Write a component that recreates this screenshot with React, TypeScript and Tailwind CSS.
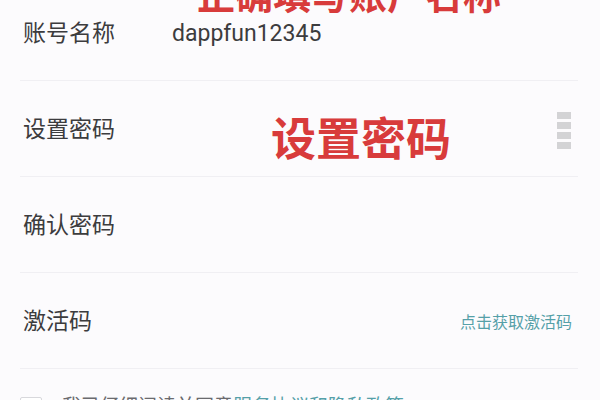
import React from "react";

const rows = [
  { label: "账号名称", value: "dappfun12345" },
  { label: "设置密码", value: "" },
  { label: "确认密码", value: "" },
  { label: "激活码", value: "" },
];

const HandleIcon = () => (
  <div className="flex flex-col gap-[3px] w-[14px]">
    <span className="h-[7px] bg-[#d3d3d5]" />
    <span className="h-[7px] bg-[#d3d3d5]" />
    <span className="h-[7px] bg-[#d3d3d5]" />
    <span className="h-[7px] bg-[#d3d3d5]" />
  </div>
);

export default function App() {
  return (
    <div className="relative w-[600px] h-[400px] overflow-hidden bg-[#fcfbfd] font-['Roboto','Noto_Sans_CJK_SC',sans-serif]">
      <div className="-mt-[15px] pl-[20px] pr-[22px]">
        {rows.map((row, i) => (
          <div key={row.label} className="flex items-center h-[96px] pt-[4px] border-b border-[#f0eff3]">
            <span className="w-[152px] pl-[3px] text-[23px] text-[#3c3c3e]">{row.label}</span>
            {row.value && <span className="text-[23px] text-[#3c3c3e]">{row.value}</span>}
            {i === 1 && (
              <div className="ml-auto mr-[7px]">
                <HandleIcon />
              </div>
            )}
            {i === 3 && (
              <span className="ml-auto mr-[6px] text-[16px] text-[#55a0a8]">点击获取激活码</span>
            )}
          </div>
        ))}
        <div className="flex items-start pt-[28px] gap-[20px]">
          <span className="w-[22px] h-[22px] border border-[#d8d8dc] rounded-[2px] bg-white" />
          <span className="text-[19px] leading-none text-[#6a6a6e]">
            我已仔细阅读并同意<span className="text-[#55a0a8]">服务协议和隐私政策</span>
          </span>
        </div>
      </div>

      {/* red annotations over the form */}
      <div className="absolute left-[197px] top-[-23px] text-[38px] leading-none font-bold text-[#d83b3b]">
        正确填写账户名称
      </div>
      <div className="absolute left-[271px] top-[118px] text-[45px] leading-none font-bold text-[#d83b3b]">
        设置密码
      </div>
    </div>
  );
}
